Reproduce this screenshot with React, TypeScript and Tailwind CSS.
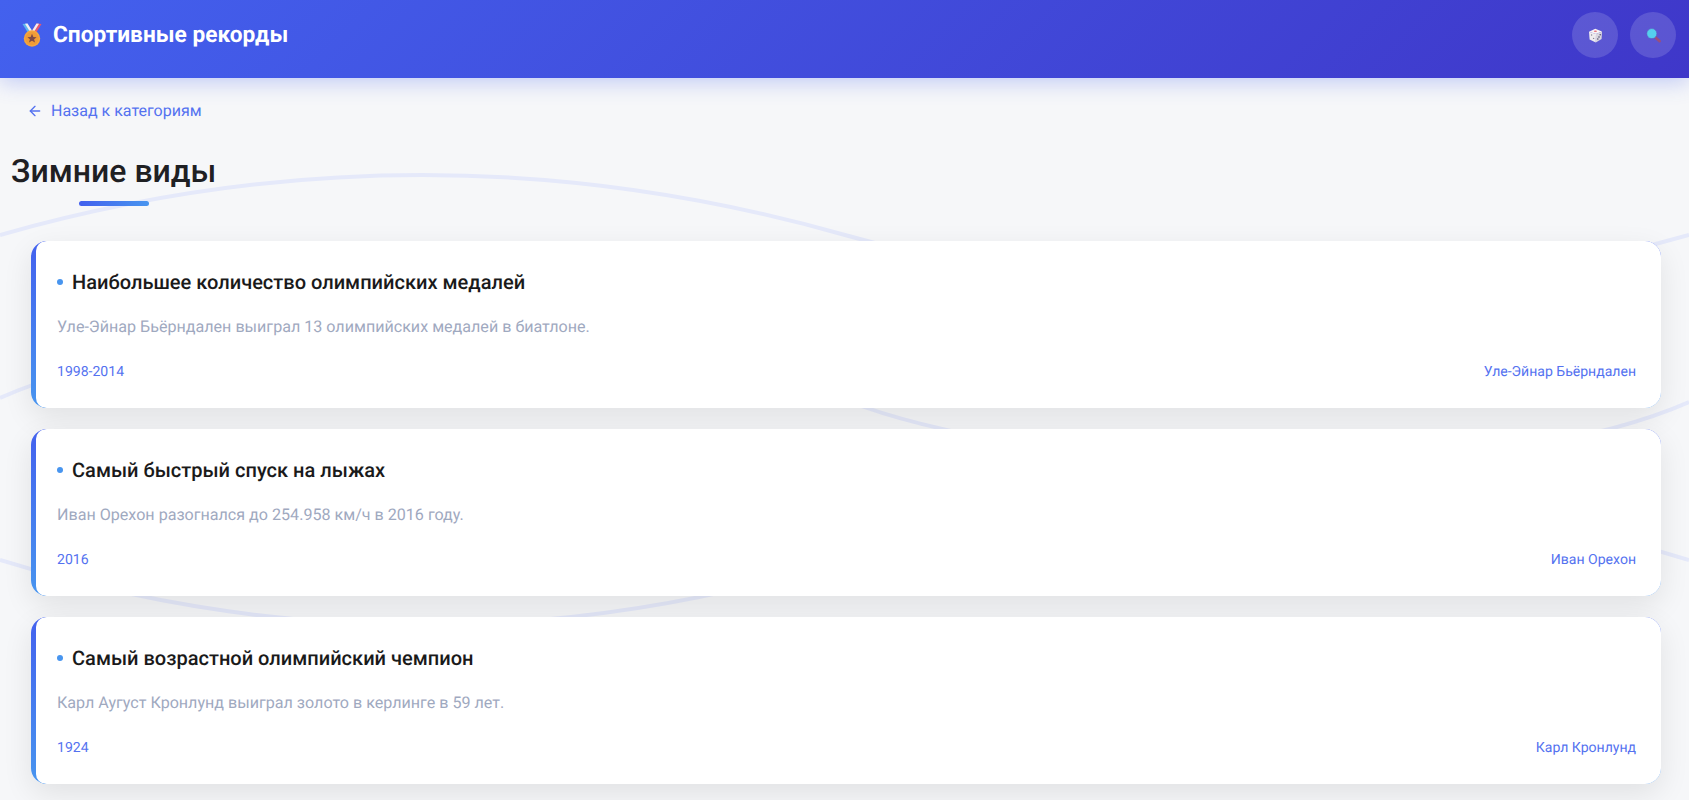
import { ArrowLeft } from "lucide-react";

const records = [
  {
    title: "Наибольшее количество олимпийских медалей",
    text: "Уле-Эйнар Бьёрндален выиграл 13 олимпийских медалей в биатлоне.",
    date: "1998-2014",
    who: "Уле-Эйнар Бьёрндален",
  },
  {
    title: "Самый быстрый спуск на лыжах",
    text: "Иван Орехон разогнался до 254.958 км/ч в 2016 году.",
    date: "2016",
    who: "Иван Орехон",
  },
  {
    title: "Самый возрастной олимпийский чемпион",
    text: "Карл Аугуст Кронлунд выиграл золото в керлинге в 59 лет.",
    date: "1924",
    who: "Карл Кронлунд",
  },
];

function Medal() {
  return (
    <svg width="22" height="24" viewBox="0 0 22 24" aria-hidden="true">
      <path d="M1.5 1 L6.5 0.5 L12.5 10 L8 11.5 Z" fill="#5fb6ee" />
      <path d="M4 0.8 L6.5 0.5 L12 9.6 L10 10.6 Z" fill="#f3eef4" />
      <path d="M20.5 1 L15.5 0.5 L9.5 10 L14 11.5 Z" fill="#e8586e" />
      <path d="M18 0.8 L15.5 0.5 L10.6 8.6 L12 10.6 Z" fill="#f3eef4" />
      <circle cx="11" cy="15.5" r="8.2" fill="#f5a53e" />
      <circle cx="11" cy="15.5" r="6.6" fill="#f09c36" />
      <path d="M11 10.8 L12.4 14 L15.6 14.2 L13.1 16.3 L14 19.6 L11 17.8 L8 19.6 L8.9 16.3 L6.4 14.2 L9.6 14 Z" fill="#7e4a48" />
    </svg>
  );
}

function Dice() {
  return (
    <svg width="15" height="15" viewBox="0 0 15 15" aria-hidden="true">
      <path d="M7.3 0.8 L14 3.4 L8 6 L1 3.8 Z" fill="#f8f4f4" />
      <path d="M1 3.8 L8 6 L7.8 14.4 L1.6 11.6 Z" fill="#efecef" />
      <path d="M8 6 L14 3.4 L13.6 11 L7.8 14.4 Z" fill="#d8d5de" />
      <ellipse cx="7.4" cy="3.2" rx="1.6" ry="0.8" fill="#e8707e" />
      <circle cx="3.6" cy="7" r="0.7" fill="#8a8598" />
      <circle cx="5.6" cy="10.4" r="0.7" fill="#8a8598" />
      <circle cx="9.8" cy="11" r="0.8" fill="#565170" />
      <circle cx="12.2" cy="6.8" r="0.8" fill="#565170" />
      <circle cx="11" cy="9" r="0.8" fill="#565170" />
    </svg>
  );
}

function Magnifier() {
  return (
    <svg width="15" height="15" viewBox="0 0 15 15" aria-hidden="true">
      <path d="M8.8 8.8 L13.6 13.2" stroke="#9a4f7c" strokeWidth="2.6" strokeLinecap="round" />
      <circle cx="5.8" cy="5.6" r="5" fill="#55d0ee" stroke="#5f55b8" strokeWidth="0.5" />
    </svg>
  );
}

export default function App() {
  return (
    <div className="relative h-[800px] overflow-hidden bg-[#f6f7f9] font-['Roboto',sans-serif] [text-rendering:geometricPrecision]">
      <svg
        className="absolute inset-0 h-full w-full"
        viewBox="0 0 1689 800"
        fill="none"
        stroke="#e5e9fa"
        strokeWidth="4"
        aria-hidden="true"
      >
        <path d="M0 235 Q422 115 845 235 T1689 235" />
        <path d="M0 398 C200 308 645 322 845 400 C1045 478 1489 490 1689 402" />
        <path d="M0 560 Q422 690 845 560 T1689 560" />
      </svg>

      <header className="relative z-10 flex h-[78px] items-start justify-between bg-[linear-gradient(135deg,#4361ee,#3f37c9)] pl-[21px] pr-[13px] pt-3 shadow-[0_4px_20px_rgba(67,97,238,0.3)]">
        <div className="flex h-[46px] items-center gap-[10px]">
          <Medal />
          <span className="mt-[1px] text-[22.7px] font-bold leading-none text-white">Спортивные рекорды</span>
        </div>
        <div className="flex gap-3">
          <button className="flex h-[46px] w-[46px] items-center justify-center rounded-full bg-white/15">
            <Dice />
          </button>
          <button className="flex h-[46px] w-[46px] items-center justify-center rounded-full bg-white/15">
            <Magnifier />
          </button>
        </div>
      </header>

      <main className="relative">
        <a className="ml-[27px] mt-[23px] flex items-center gap-[8px] text-[16px] leading-5 text-[#5472f0]">
          <ArrowLeft size={16} strokeWidth={2} />
          Назад к категориям
        </a>

        <div className="ml-[11px] mt-[30px] inline-flex flex-col items-center">
          <h1 className="text-[32px] font-medium leading-10 text-[#1f2023]">Зимние виды</h1>
          <div className="mt-[10px] h-[5px] w-[70px] rounded-sm bg-[linear-gradient(90deg,#4361ee,#4895ef)]" />
        </div>

        <div className="ml-[31px] mr-[28px] mt-[35px] flex flex-col gap-[21px]">
          {records.map((r) => (
            <article
              key={r.title}
              className="overflow-hidden rounded-2xl bg-[linear-gradient(180deg,#4361ee,#4895ef)] pl-[5px] shadow-[0_10px_30px_rgba(0,0,0,0.09)]"
            >
              <div className="rounded-l-[10px] bg-white pb-[26px] pl-[21px] pr-[25px] pt-[26px]">
                <div className="flex items-center gap-[9px]">
                  <span className="h-[6px] w-[6px] rounded-full bg-[#4895ef]" />
                  <h2 className="text-[20.05px] font-medium leading-[30px] text-[#1a1a1a]">{r.title}</h2>
                </div>
                <p className="mt-[18px] text-[16.1px] leading-6 text-[#9fa9bf]">{r.text}</p>
                <div className="mt-[23px] flex justify-between text-[14.05px] leading-5 text-[#5472f0]">
                  <span>{r.date}</span>
                  <span>{r.who}</span>
                </div>
              </div>
            </article>
          ))}
        </div>
      </main>
    </div>
  );
}
